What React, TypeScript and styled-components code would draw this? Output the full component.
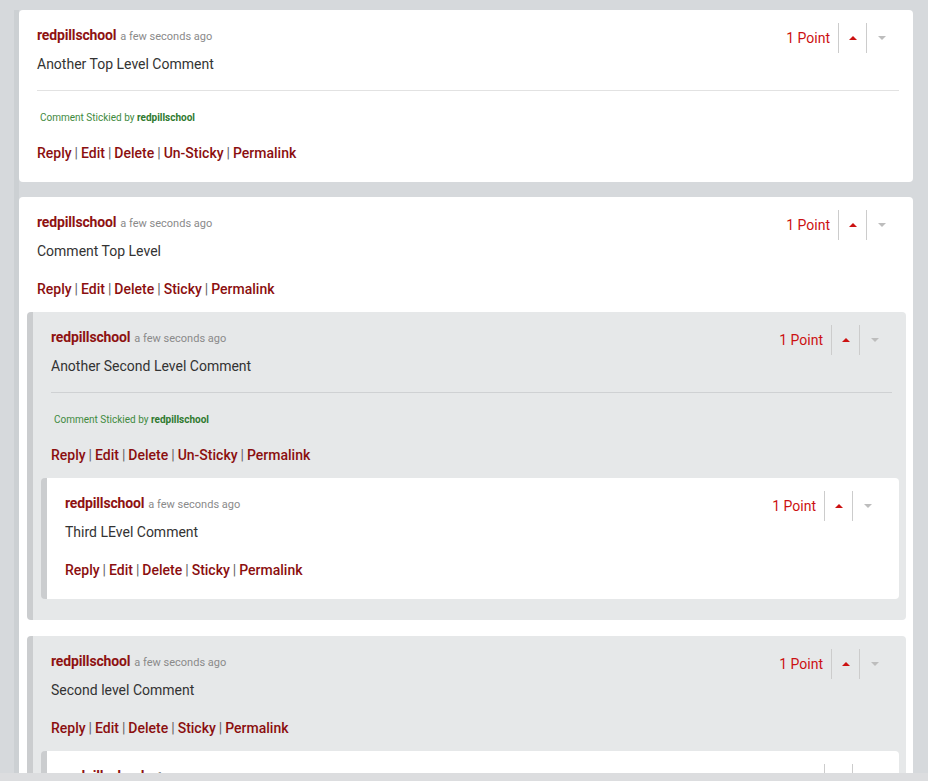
import styled, { createGlobalStyle } from 'styled-components'

type CommentData = {
  id: number
  author: string
  time: string
  body: string
  points: number
  sticky?: boolean
  children?: CommentData[]
}

const comments: CommentData[] = [
  {
    id: 1,
    author: 'redpillschool',
    time: 'a few seconds ago',
    body: 'Another Top Level Comment',
    points: 1,
    sticky: true
  },
  {
    id: 2,
    author: 'redpillschool',
    time: 'a few seconds ago',
    body: 'Comment Top Level',
    points: 1,
    children: [
      {
        id: 3,
        author: 'redpillschool',
        time: 'a few seconds ago',
        body: 'Another Second Level Comment',
        points: 1,
        sticky: true,
        children: [
          { id: 4, author: 'redpillschool', time: 'a few seconds ago', body: 'Third LEvel Comment', points: 1 }
        ]
      },
      {
        id: 5,
        author: 'redpillschool',
        time: 'a few seconds ago',
        body: 'Second level Comment',
        points: 1,
        children: [
          { id: 6, author: 'redpillschool', time: 'a few seconds ago', body: 'Third Level Comment', points: 1 }
        ]
      }
    ]
  }
]

const App = () => (
  <>
    <GlobalStyle />
    <Viewport>
      <Thread>
        {comments.map((c) => (
          <Comment key={c.id} comment={c} depth={0} />
        ))}
      </Thread>
    </Viewport>
  </>
)

export default App

const Comment = ({ comment, depth }: { comment: CommentData; depth: number }) => {
  const actions = ['Reply', 'Edit', 'Delete', comment.sticky ? 'Un-Sticky' : 'Sticky', 'Permalink']

  return (
    <Card $depth={depth}>
      <Content>
        <Header>
          <Main>
            <Meta>
              <Author>{comment.author}</Author>
              <Time>{comment.time}</Time>
            </Meta>
            <Body>{comment.body}</Body>
          </Main>
          <Vote>
            <Points>
              {comment.points} Point{comment.points === 1 ? '' : 's'}
            </Points>
            <VoteCell>
              <Arrow $up />
            </VoteCell>
            <VoteCell>
              <Arrow />
            </VoteCell>
          </Vote>
        </Header>
        {comment.sticky && (
          <>
            <Rule $depth={depth} />
            <StickyNote>
              Comment Stickied by <strong>{comment.author}</strong>
            </StickyNote>
          </>
        )}
        <Actions>
          {actions.map((a, i) => (
            <span key={a}>
              {i > 0 && <Pipe>|</Pipe>}
              <ActionLink href="#">{a}</ActionLink>
            </span>
          ))}
        </Actions>
      </Content>
      {comment.children && (
        <Children>
          {comment.children.map((c) => (
            <Comment key={c.id} comment={c} depth={depth + 1} />
          ))}
        </Children>
      )}
    </Card>
  )
}

const GlobalStyle = createGlobalStyle`
  html, body {
    margin: 0;
    background: #dadde0;
    font-family: Roboto, 'Noto Sans', Arial, sans-serif;
  }
`

const Viewport = styled.div`
  height: 781px;
  overflow: hidden;
  padding: 10px 15px 0 14px;
  box-sizing: border-box;
  background: #d6d9dc;
  border-bottom: 8px solid #dcdddf;
`

const Thread = styled.div`
  border-left: 5px solid #ccd0d3;
  min-height: 100%;
`

const Card = styled.div<{ $depth: number }>`
  background: ${(p) => (p.$depth % 2 === 0 ? '#ffffff' : '#e6e8e9')};
  border-radius: 4px;
  border-left: ${(p) => (p.$depth === 0 ? 'none' : '6px solid #cbcdcf')};
  padding: 13px 0 6px;
  margin-bottom: ${(p) => (p.$depth === 0 ? '15px' : '16px')};

  &:last-child {
    margin-bottom: 15px;
  }
`

const Content = styled.div`
  padding: 0 14px 0 18px;
`

const Header = styled.div`
  display: flex;
  align-items: flex-start;
  justify-content: space-between;
`

const Main = styled.div`
  padding-top: 2px;
`

const Meta = styled.div`
  display: flex;
  align-items: baseline;
  height: 20px;
  line-height: 20px;
  white-space: nowrap;
`

const Author = styled.a`
  font-size: 14px;
  font-weight: 700;
  letter-spacing: -0.15px;
  color: #8e1212;
`

const Time = styled.span`
  margin-left: 4px;
  font-size: 11px;
  color: #8a8a8a;
`

const Body = styled.div`
  margin-top: 9px;
  font-size: 14px;
  line-height: 20px;
  color: #333333;
`

const Vote = styled.div`
  display: flex;
  align-items: center;
  height: 30px;
  margin-right: 2px;
`

const Points = styled.span`
  font-size: 14px;
  color: #cc1111;
  margin-right: 8px;
`

const VoteCell = styled.div`
  width: 27px;
  height: 30px;
  border-left: 1px solid #cccccc;
  display: flex;
  align-items: center;
  justify-content: center;

  & + & {
    width: 30px;
  }
`

const Arrow = styled.span<{ $up?: boolean }>`
  width: 0;
  height: 0;
  border-left: 4px solid transparent;
  border-right: 4px solid transparent;
  ${(p) => (p.$up ? 'border-bottom: 4px solid #cc1111;' : 'border-top: 4px solid #bdbdbd;')}
`

const Rule = styled.div<{ $depth: number }>`
  margin-top: 16px;
  border-top: 1px solid ${(p) => (p.$depth % 2 === 0 ? '#e2e2e2' : '#cfd1d3')};
`

const StickyNote = styled.div`
  margin-top: 20px;
  margin-bottom: 4px;
  padding-left: 3px;
  font-size: 10px;
  line-height: 14px;
  color: #3e8a3e;

  strong {
    color: #2f7a2f;
    font-weight: 700;
  }
`

const Actions = styled.div`
  margin-top: 18px;
  margin-bottom: 13px;
  font-size: 14px;
  line-height: 20px;
`

const ActionLink = styled.a`
  color: #8b0f0f;
  font-weight: 500;
  text-decoration: none;
`

const Pipe = styled.span`
  color: #666666;
  margin: 0 3px;
`

const Children = styled.div`
  padding: 0 7px 0 8px;
`
